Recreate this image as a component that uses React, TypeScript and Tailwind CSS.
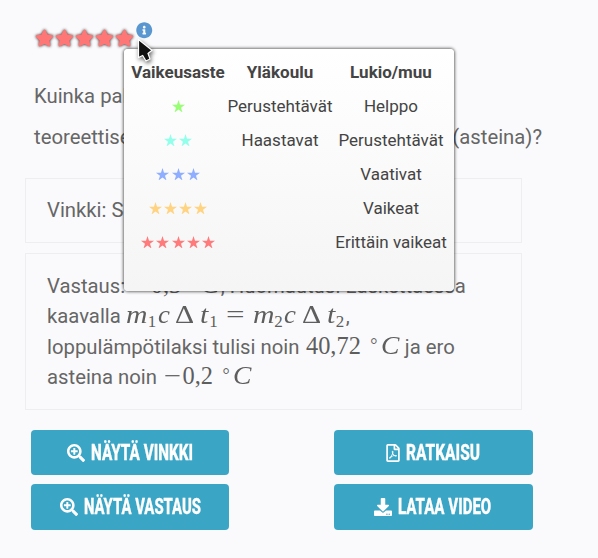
import React from "react";
import { FaDownload, FaInfoCircle, FaRegFilePdf, FaSearchPlus, FaStar } from "react-icons/fa";

/** One symbol of a formula: w is its advance, s stretches the glyph. */
function Sym({ w, s = "", children }: { w: string; s?: string; children: React.ReactNode }) {
  return (
    <span className={`inline-block ${w}`}>
      <span className={`inline-block origin-left ${s}`}>{children}</span>
    </span>
  );
}

function Formula({ className = "", children }: { className?: string; children: React.ReactNode }) {
  return (
    <span
      className={`inline-flex items-baseline whitespace-pre font-['Liberation_Serif',serif] text-[24.4px] leading-none text-[#5e5e5e] ${className}`}
    >
      {children}
    </span>
  );
}

function Term({ n }: { n: string }) {
  return (
    <>
      <Sym w="w-[21.5px]" s="italic scale-x-[1.22]">m</Sym>
      <Sym w="w-[10px]" s="text-[17px] translate-y-[4px]">{n}</Sym>
      <Sym w="w-[17.5px]" s="italic scale-x-[1.1]">c</Sym>
      <Sym w="w-[25px]" s="scale-x-[1.22]">Δ</Sym>
      <Sym w="w-[9px]" s="italic scale-x-[1.22]">t</Sym>
      <Sym w="w-[10px]" s="text-[17px] translate-y-[4px]">{n}</Sym>
    </>
  );
}

function Celsius() {
  return (
    <>
      <Sym w="w-[20px]" s="text-[18px] translate-x-[9.5px] -translate-y-[3px]">°</Sym>
      <Sym w="w-[19.5px]" s="italic scale-x-[1.13]">C</Sym>
    </>
  );
}

function Line({ children }: { children: React.ReactNode }) {
  return <div className="flex h-[30.6px] items-baseline whitespace-pre leading-[30.6px]">{children}</div>;
}

const levels = [
  { count: 1, color: "text-[#98ff75]", school: "Perustehtävät", upper: "Helppo" },
  { count: 2, color: "text-[#91ffea]", school: "Haastavat", upper: "Perustehtävät" },
  { count: 3, color: "text-[#8faeff]", school: "", upper: "Vaativat" },
  { count: 4, color: "text-[#ffd380]", school: "", upper: "Vaikeat" },
  { count: 5, color: "text-[#ff7a7a]", school: "", upper: "Erittäin vaikeat" },
];

function SharpStar() {
  return (
    <svg viewBox="0 0 24 23" className="h-[12.5px] w-[13px]" fill="currentColor">
      <path d="M12 0l2.8 8.8H24l-7.4 5.4 2.8 8.8-7.4-5.4L4.6 23l2.8-8.8L0 8.8h9.2z" />
    </svg>
  );
}

function LevelTooltip() {
  return (
    <div className="absolute left-[124px] top-[49px] h-[242px] w-[330px] rounded-[4px] bg-linear-to-b from-white to-[#f5f5f5] pt-[7px] text-[17px] text-[#444] shadow-[0_0_3px_1px_rgba(0,0,0,0.55)]">
      <div className="grid h-[34px] grid-cols-[108px_96px_126px] items-center text-center font-bold">
        <span>Vaikeusaste</span>
        <span>Yläkoulu</span>
        <span>Lukio/muu</span>
      </div>
      {levels.map((l) => (
        <div key={l.count} className="grid h-[34px] grid-cols-[108px_96px_126px] items-center whitespace-nowrap">
          <span className={`flex justify-center gap-[2.2px] pb-[2px] ${l.color}`}>
            {Array.from({ length: l.count }, (_, i) => (
              <SharpStar key={i} />
            ))}
          </span>
          <span className="flex justify-center">{l.school}</span>
          <span className="flex justify-center">{l.upper}</span>
        </div>
      ))}
    </div>
  );
}

function ActionButton({
  icon,
  w,
  s,
  children,
}: {
  icon: React.ReactNode;
  w: string;
  s: string;
  children: string;
}) {
  return (
    <button className="flex items-center justify-center gap-[6px] rounded-[4px] bg-[#3ba5c5] text-white">
      {icon}
      <span
        className={`${w} whitespace-nowrap text-left text-[21.5px] font-extrabold leading-none [-webkit-text-stroke:0.3px_white]`}
      >
        <span className={`inline-block origin-left ${s}`}>{children}</span>
      </span>
    </button>
  );
}

export default function App() {
  return (
    <main className="relative h-[558px] w-[598px] overflow-hidden bg-[#fafafc] font-['Roboto',sans-serif] text-[20.3px] text-[#666]">
      <div className="flex h-[76px] pl-[35px] pt-[29px]">
        <div className="flex gap-[1px] text-[#ff7676]">
          {[0, 1, 2, 3, 4].map((i) => (
            <FaStar key={i} className="h-[18px] w-[19px] drop-shadow-[0_0_1.5px_#222]" />
          ))}
        </div>
        <FaInfoCircle className="-mt-[7px] ml-[2px] h-[16.5px] w-[16.5px] text-[#5a97d0]" />
      </div>

      <div className="h-[102px] whitespace-nowrap pl-[34px] leading-[41px]">
        <p>Kuinka paljon</p>
        <div className="flex w-[508px] justify-between">
          <span>teoreettisesti</span>
          <span>(asteina)?</span>
        </div>
      </div>

      <section className="ml-[25px] flex h-[65px] w-[497px] items-center border border-[#eeeef0] pl-[21px]">
        Vinkki: Sekoitus
      </section>

      <section className="ml-[25px] mt-[10px] h-[157px] w-[497px] border border-[#eeeef0] pl-[21px] pt-[16.6px]">
        <Line>
          Vastaus:{" "}
          <Formula className="ml-[1.5px]">
            <Sym w="w-[19px]" s="scale-x-[1.25]">−</Sym>0,3<Celsius />
          </Formula>
          , Huomautus! Laskettaessa
        </Line>
        <Line>
          kaavalla{" "}
          <Formula className="ml-[0.5px]">
            <Term n="1" />
            <Sym w="w-[33.5px]" s="translate-x-[7px] scale-x-[1.35]">=</Sym>
            <Term n="2" />
          </Formula>
          ,
        </Line>
        <Line>
          loppulämpötilaksi tulisi noin{" "}
          <Formula className="ml-[1.5px] mr-[4.5px]">
            40,72<Celsius />
          </Formula>{" "}
          ja ero
        </Line>
        <Line>
          asteina noin{" "}
          <Formula className="ml-[1.5px]">
            <Sym w="w-[19px]" s="scale-x-[1.25]">−</Sym>0,2<Celsius />
          </Formula>
        </Line>
      </section>

      <div className="ml-[31px] mt-[20px] grid w-[502px] grid-cols-[198px_199px] grid-rows-[45px_46px] justify-between gap-y-[9px]">
        <ActionButton icon={<FaSearchPlus className="h-[18px] w-[18px]" />} w="w-[102px]" s="scale-x-[0.71]">
          NÄYTÄ VINKKI
        </ActionButton>
        <ActionButton icon={<FaRegFilePdf className="h-[18px] w-[14px]" />} w="w-[75px]" s="scale-x-[0.72]">
          RATKAISU
        </ActionButton>
        <ActionButton icon={<FaSearchPlus className="h-[18px] w-[18px]" />} w="w-[117px]" s="scale-x-[0.69]">
          NÄYTÄ VASTAUS
        </ActionButton>
        <ActionButton icon={<FaDownload className="h-[18px] w-[18px]" />} w="w-[95px]" s="scale-x-[0.7]">
          LATAA VIDEO
        </ActionButton>
      </div>

      <LevelTooltip />

      <svg
        viewBox="0 0 17 26"
        className="absolute left-[137px] top-[38px] h-[26px] w-[17px] drop-shadow-[1px_2px_2px_rgba(0,0,0,0.6)]"
      >
        <path d="M1.5 1.5v18l4.2-2 3.3 5.5 4-2-2-5.5 4-3.3z" fill="#111" stroke="#fff" strokeWidth="1.2" />
      </svg>
    </main>
  );
}
